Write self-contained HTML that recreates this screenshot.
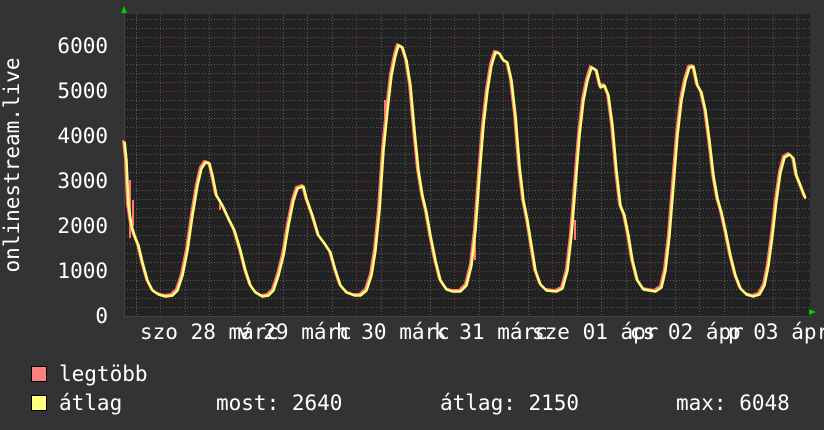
<!DOCTYPE html>
<html><head><meta charset="utf-8"><style>
html,body{margin:0;padding:0;background:#333333;}
svg{display:block}
text{font-family:"DejaVu Sans Mono","Liberation Mono",monospace;font-size:21px;fill:#ffffff;}
</style></head><body>
<svg width="824" height="430" viewBox="0 0 824 430" xmlns="http://www.w3.org/2000/svg">
<rect width="824" height="430" fill="#333333"/>
<rect x="124" y="14" width="686" height="302" fill="#222222"/>
<g stroke="#5a5a5a" stroke-width="1" stroke-dasharray="1,2">
<path d="M124 307.5H810M124 298.5H810M124 289.5H810M124 280.5H810M124 262.5H810M124 253.5H810M124 244.5H810M124 235.5H810M124 217.5H810M124 208.5H810M124 199.5H810M124 190.5H810M124 172.5H810M124 163.5H810M124 154.5H810M124 145.5H810M124 127.5H810M124 118.5H810M124 109.5H810M124 100.5H810M124 82.5H810M124 73.5H810M124 64.5H810M124 55.5H810M124 37.5H810M124 28.5H810M124 19.5H810"/>
<path d="M136.5 14V316M185.5 14V316M209.5 14V316M234.5 14V316M283.5 14V316M307.5 14V316M332.5 14V316M381.5 14V316M405.5 14V316M430.5 14V316M479.5 14V316M503.5 14V316M528.5 14V316M577.5 14V316M601.5 14V316M626.5 14V316M675.5 14V316M699.5 14V316M724.5 14V316M773.5 14V316M797.5 14V316"/>
</g>
<g stroke="#7a3a3a" stroke-width="1" stroke-dasharray="1,2">
<path d="M124 271.5H810M124 226.5H810M124 181.5H810M124 136.5H810M124 91.5H810M124 46.5H810"/>
<path d="M160.5 14V316M258.5 14V316M356.5 14V316M454.5 14V316M552.5 14V316M650.5 14V316M748.5 14V316"/>
</g>
<path d="M124 316.5H812M124.5 12V316" stroke="#444" stroke-width="1"/>
<polygon points="124,6 121,13 127,13" fill="#00cc00"/>
<polygon points="816,312 809,309 809,315" fill="#00cc00"/>
<path d="M133 200V226M130 238V180M220 200V210M385 100V140M475 240V260M575 220V240M675 155V170" stroke="#ff7777" stroke-width="2"/>
<g fill="none" stroke-linejoin="round">
<path transform="translate(-1,-1)" stroke="#ff7777" stroke-width="2" d="M124 141L126 160L128 205L131 225L134 235L138 245L142 262L147 280L152 290L158 294L165 296L172 295L177 290L182 275L187 250L192 215L197 185L201 168L205 162L209 163L212 175L216 195L222 205L228 218L234 230L240 250L245 270L250 285L255 292L262 296L268 295L273 290L278 275L283 255L288 225L293 200L297 188L303 186L306 198L312 215L318 235L324 243L330 252L335 270L340 285L346 292L354 295L360 295L366 290L371 275L375 250L379 210L383 150L387 110L391 75L395 55L398 45L402 47L406 60L410 85L414 130L418 170L422 195L426 212L430 235L435 260L440 280L446 289L452 291L460 291L466 285L471 265L475 230L479 175L483 125L487 90L491 65L495 52L499 53L503 60L507 62L511 80L515 115L519 165L523 200L527 220L531 245L535 270L540 284L546 290L556 291L562 288L567 270L571 235L575 185L579 135L583 100L587 80L591 67L596 70L600 87L604 85L608 95L612 125L616 170L620 205L624 215L628 235L632 260L637 280L643 289L655 291L661 287L665 270L669 235L673 185L677 135L681 100L685 80L689 67L693 66L697 85L701 92L705 110L709 140L713 175L717 198L721 212L725 230L730 255L735 275L740 288L746 294L753 296L759 294L764 285L768 265L772 235L776 200L780 172L784 157L789 154L793 158L796 175L800 185L805 198"/>
<path transform="translate(0.5,0.5)" stroke="#ffff77" stroke-width="2.5" d="M124 141L126 160L128 205L131 225L134 235L138 245L142 262L147 280L152 290L158 294L165 296L172 295L177 290L182 275L187 250L192 215L197 185L201 168L205 162L209 163L212 175L216 195L222 205L228 218L234 230L240 250L245 270L250 285L255 292L262 296L268 295L273 290L278 275L283 255L288 225L293 200L297 188L303 186L306 198L312 215L318 235L324 243L330 252L335 270L340 285L346 292L354 295L360 295L366 290L371 275L375 250L379 210L383 150L387 110L391 75L395 55L398 45L402 47L406 60L410 85L414 130L418 170L422 195L426 212L430 235L435 260L440 280L446 289L452 291L460 291L466 285L471 265L475 230L479 175L483 125L487 90L491 65L495 52L499 53L503 60L507 62L511 80L515 115L519 165L523 200L527 220L531 245L535 270L540 284L546 290L556 291L562 288L567 270L571 235L575 185L579 135L583 100L587 80L591 67L596 70L600 87L604 85L608 95L612 125L616 170L620 205L624 215L628 235L632 260L637 280L643 289L655 291L661 287L665 270L669 235L673 185L677 135L681 100L685 80L689 67L693 66L697 85L701 92L705 110L709 140L713 175L717 198L721 212L725 230L730 255L735 275L740 288L746 294L753 296L759 294L764 285L768 265L772 235L776 200L780 172L784 157L789 154L793 158L796 175L800 185L805 198"/>
</g>
<g text-anchor="end">
<text x="108" y="323">0</text>
<text x="108" y="278">1000</text>
<text x="108" y="233">2000</text>
<text x="108" y="188">3000</text>
<text x="108" y="143">4000</text>
<text x="108" y="98">5000</text>
<text x="108" y="53">6000</text>
</g>
<text transform="translate(19,165) rotate(-90)" text-anchor="middle">onlinestream.live</text>
<text x="140" y="339">szo 28 márc</text>
<text x="238" y="339">v 29 márc</text>
<text x="336" y="339">h 30 márc</text>
<text x="434" y="339">k 31 márc</text>
<text x="532" y="339">sze 01 ápr</text>
<text x="630" y="339">cs 02 ápr</text>
<text x="728" y="339">p 03 ápr</text>
<rect x="31.5" y="366.5" width="15" height="15" fill="#ff7f7f" stroke="#000"/>
<rect x="31.5" y="395.5" width="15" height="15" fill="#ffff7f" stroke="#000"/>
<text x="59" y="381">legtöbb</text>
<text x="59" y="410">átlag</text>
<text x="216" y="410">most: 2640</text>
<text x="440" y="410">átlag: 2150</text>
<text x="676" y="410">max: 6048</text>
</svg>
</body></html>
